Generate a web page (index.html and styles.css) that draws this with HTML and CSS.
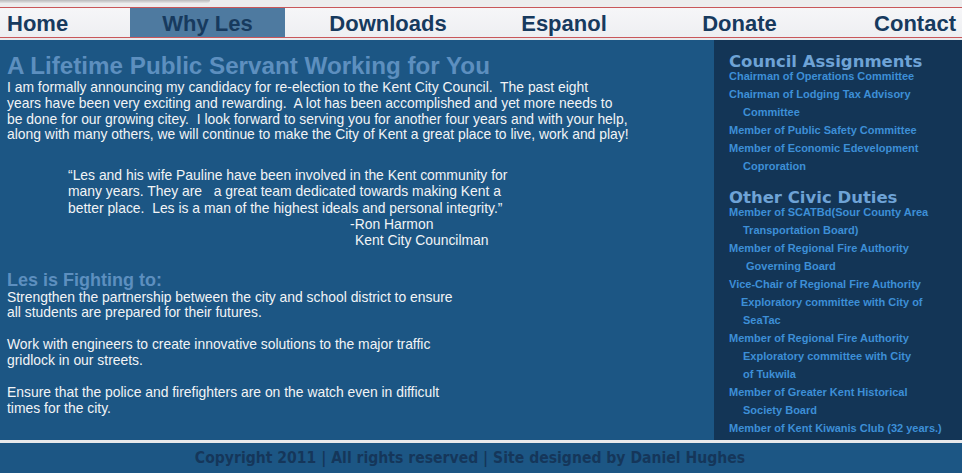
FILE: index.html
```html
<!DOCTYPE html>
<html>
<head>
<meta charset="utf-8">
<link rel="stylesheet" href="styles.css">
</head>
<body>
<div class="topbar"><div class="shade"></div></div>
<nav class="nav">
  <a class="nav-item home">Home</a>
  <a class="nav-item why active">Why Les</a>
  <a class="nav-item downloads">Downloads</a>
  <a class="nav-item espanol">Espanol</a>
  <a class="nav-item donate">Donate</a>
  <a class="nav-item contact">Contact</a>
</nav>
<div class="gap"></div>
<div class="content">
  <section class="main-col">
    <h1 class="title">A Lifetime Public Servant Working for You</h1>
    <p class="intro">I am formally announcing my candidacy for re-election to the Kent City Council.&nbsp; The past eight<br>years have been very exciting and rewarding.&nbsp; A lot has been accomplished and yet more needs to<br>be done for our growing citey.&nbsp; I look forward to serving you for another four years and with your help,<br>along with many others, we will continue to make the City of Kent a great place to live, work and play!</p>
    <div class="quote">
      <p>“Les and his wife Pauline have been involved in the Kent community for<br>many years. They are &nbsp; a great team dedicated towards making Kent a<br>better place.&nbsp; Les is a man of the highest ideals and personal integrity.”</p>
      <p class="sig">-Ron Harmon</p>
      <p class="sig2">Kent City Councilman</p>
    </div>
    <h2 class="subtitle">Les is Fighting to:</h2>
    <p class="goal">Strengthen the partnership between the city and school district to ensure<br>all students are prepared for their futures.</p>
    <p class="goal">Work with engineers to create innovative solutions to the major traffic<br>gridlock in our streets.</p>
    <p class="goal">Ensure that the police and firefighters are on the watch even in difficult<br>times for the city.</p>
  </section>
  <aside class="sidebar">
    <h3 class="side-title">Council Assignments</h3>
    <ul class="side-list">
      <li>Chairman of Operations Committee</li>
      <li>Chairman of Lodging Tax Advisory<br>Committee</li>
      <li>Member of Public Safety Committee</li>
      <li>Member of Economic Edevelopment<br>Coproration</li>
    </ul>
    <h3 class="side-title second">Other Civic Duties</h3>
    <ul class="side-list">
      <li>Member of SCATBd(Sour County Area<br>Transportation Board)</li>
      <li>Member of Regional Fire Authority<br><span class="extra">Governing Board</span></li>
      <li>Vice-Chair of Regional Fire Authority<br><span class="less">Exploratory committee with City of</span><br>SeaTac</li>
      <li>Member of Regional Fire Authority<br>Exploratory committee with City<br>of Tukwila</li>
      <li>Member of Greater Kent Historical<br>Society Board</li>
      <li>Member of Kent Kiwanis Club (32 years.)</li>
    </ul>
  </aside>
</div>
<div class="divider"></div>
<footer class="footer">Copyright 2011 | All rights reserved | Site designed by Daniel Hughes</footer>
</body>
</html>
```
FILE: styles.css
```css
html, body {
  margin: 0;
  padding: 0;
}
body {
  width: 962px;
  height: 473px;
  overflow: hidden;
  background: #ececed;
  font-family: "Liberation Sans", Arial, sans-serif;
}
.topbar {
  height: 7px;
  background: #ededee;
}
.shade {
  width: 210px;
  height: 3px;
  background: linear-gradient(to bottom, #b9b9bb, #e4e4e5);
  border-radius: 0 0 4px 0;
}
.nav {
  display: flex;
  height: 29px;
  border-top: 1px solid #c9575a;
  border-bottom: 1px solid #c9575a;
  background: linear-gradient(to bottom, #f6f6f8, #eeeff2);
}
.nav-item {
  display: block;
  font-weight: bold;
  font-size: 22px;
  line-height: 29px;
  padding-top: 1px;
  color: #173a5e;
  text-align: center;
  box-sizing: border-box;
}
.home { width: 130px; text-align: left; padding-left: 7px; }
.why { width: 155px; }
.downloads { width: 206px; }
.espanol { width: 146px; }
.donate { width: 205px; }
.contact { width: 120px; text-align: right; padding-right: 6px; }
.active { background: #4e7aa0; }
.gap {
  height: 2px;
  background: #e9eaec;
}
.content {
  display: flex;
  height: 400px;
  background: #1c5684;
}
.main-col {
  width: 714px;
  padding: 13px 0 0 7px;
  box-sizing: border-box;
  color: #f2f4f6;
  font-size: 13.9px;
  line-height: 15.8px;
}
.title {
  margin: 0 0 1px;
  font-size: 24.2px;
  line-height: 26px;
  color: #5d8fbf;
}
.intro {
  margin: 0;
}
.quote {
  margin: 24px 0 0 61px;
}
.quote p {
  margin: 0;
  line-height: 16.3px;
}
.quote .sig { padding-left: 282px; }
.quote .sig2 { padding-left: 287px; }
.subtitle {
  margin: 22px 0 0;
  font-size: 18px;
  line-height: 19px;
  color: #5d8fbf;
}
.goal {
  margin: 0 0 16px;
}
.sidebar {
  width: 248px;
  background: #133556;
  padding: 15px 0 0 15px;
  box-sizing: border-box;
}
.side-title {
  margin: 0 0 -2px;
  font-family: "DejaVu Sans", Verdana, sans-serif;
  font-size: 16.5px;
  line-height: 14px;
  font-weight: bold;
  color: #6ea3d6;
}
.side-title.second {
  margin-top: 16px;
}
.side-list {
  list-style: none;
  margin: 0;
  padding: 0;
}
.side-list li {
  font-size: 11px;
  font-weight: bold;
  line-height: 18px;
  color: #3d8fd7;
  padding-left: 14px;
  text-indent: -14px;
}
.extra { padding-left: 3px; }
.less { margin-left: -2px; }
.divider {
  height: 3px;
  background: #e8e9eb;
}
.footer {
  height: 30px;
  background: #1c5684;
  color: #15365a;
  font-family: "DejaVu Sans Condensed", "DejaVu Sans", Verdana, sans-serif;
  font-weight: bold;
  font-size: 15.6px;
  line-height: 30px;
  text-align: center;
  padding-right: 22px;
}
```
